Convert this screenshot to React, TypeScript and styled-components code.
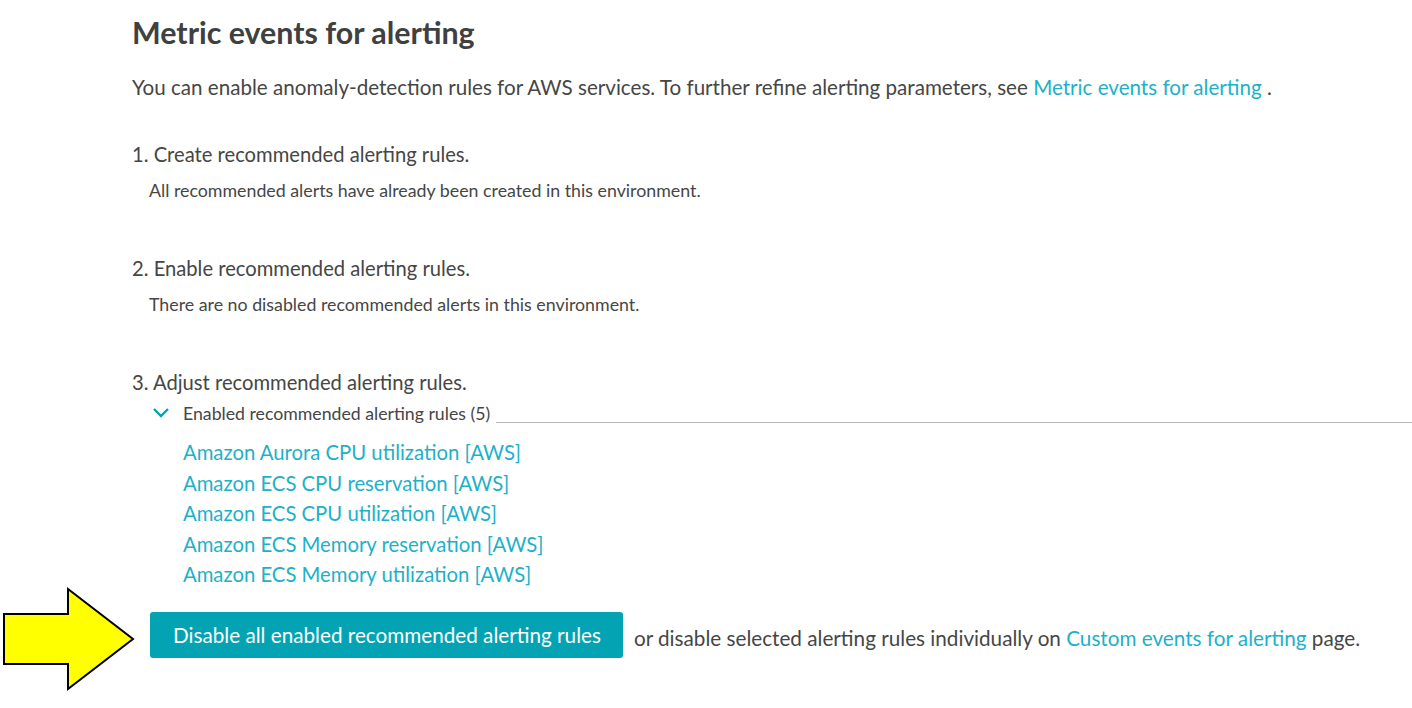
import React from "react";
import styled, { createGlobalStyle } from "styled-components";

const colors = {
  text: "#454646",
  link: "#1cb1c9",
  button: "#04a3b3",
  rule: "#b7b7b7",
};

const GlobalStyle = createGlobalStyle`
  body {
    margin: 0;
    background: #ffffff;
    font-family: Lato, "Noto Sans", sans-serif;
    color: ${colors.text};
  }
`;

const rules = [
  "Amazon Aurora CPU utilization [AWS]",
  "Amazon ECS CPU reservation [AWS]",
  "Amazon ECS CPU utilization [AWS]",
  "Amazon ECS Memory reservation [AWS]",
  "Amazon ECS Memory utilization [AWS]",
];

function App() {
  return (
    <>
      <GlobalStyle />
      <Page>
        <Title>Metric events for alerting</Title>
        <Intro>
          You can enable anomaly-detection rules for AWS services. To further
          refine alerting parameters, see{" "}
          <Link href="#">Metric events for alerting</Link> .
        </Intro>

        <Step>
          <StepTitle>1. Create recommended alerting rules.</StepTitle>
          <StepNote>
            All recommended alerts have already been created in this
            environment.
          </StepNote>
        </Step>

        <Step>
          <StepTitle>2. Enable recommended alerting rules.</StepTitle>
          <StepNote>
            There are no disabled recommended alerts in this environment.
          </StepNote>
        </Step>

        <Step>
          <StepTitle>3. Adjust recommended alerting rules.</StepTitle>
          <Expander>
            <Chevron viewBox="0 0 18 12" aria-hidden>
              <path d="M2 2 L9 9 L16 2" />
            </Chevron>
            <ExpanderLabel>Enabled recommended alerting rules (5)</ExpanderLabel>
            <ExpanderRule />
          </Expander>
          <RuleList>
            {rules.map((r) => (
              <li key={r}>
                <Link href="#">{r}</Link>
              </li>
            ))}
          </RuleList>
          <ActionRow>
            <Pointer viewBox="0 0 134 104" aria-hidden>
              <path d="M2 27 H66 V2 L131 52 L66 102 V77 H2 Z" />
            </Pointer>
            <PrimaryButton>Disable all enabled recommended alerting rules</PrimaryButton>
            <ActionText>
              or disable selected alerting rules individually on{" "}
              <Link href="#">Custom events for alerting</Link> page.
            </ActionText>
          </ActionRow>
        </Step>
      </Page>
    </>
  );
}

const Page = styled.main`
  min-height: 100vh;
  box-sizing: border-box;
  padding: 14px 0 60px 132px;
`;

const Title = styled.h1`
  margin: 0;
  font-size: 30.4px;
  font-weight: 700;
  line-height: 36px;
  color: #3f4040;
`;

const Intro = styled.p`
  margin: 24px 0 0;
  font-size: 20.6px;
  line-height: 26px;
`;

const Link = styled.a`
  color: ${colors.link};
  text-decoration: none;
`;

const Step = styled.section`
  margin-top: 41px;
  & + & {
    margin-top: 54px;
  }
`;

const StepTitle = styled.h2`
  margin: 0;
  font-size: 20.2px;
  font-weight: 400;
  line-height: 26px;
`;

const StepNote = styled.p`
  margin: 12px 0 0 17px;
  font-size: 17.8px;
  line-height: 22px;
`;

const Expander = styled.div`
  display: flex;
  align-items: center;
  margin: 7px 0 0 20px;
  height: 22px;
`;

const Chevron = styled.svg`
  width: 18px;
  height: 12px;
  margin-right: 13px;
  fill: none;
  stroke: ${colors.button};
  stroke-width: 2.4;
`;

const ExpanderLabel = styled.span`
  font-size: 17.7px;
  white-space: nowrap;
`;

const ExpanderRule = styled.span`
  flex: 1;
  align-self: flex-end;
  margin: 0 0 1px 6px;
  border-bottom: 1.5px solid ${colors.rule};
`;

const RuleList = styled.ul`
  list-style: none;
  margin: 13px 0 0 51px;
  padding: 0;
  font-size: 20.3px;
  line-height: 30.5px;
`;

const ActionRow = styled.div`
  position: relative;
  display: flex;
  align-items: center;
  margin: 22px 0 0 18px;
`;

const Pointer = styled.svg`
  position: absolute;
  left: -148px;
  top: -25px;
  width: 134px;
  height: 104px;
  overflow: visible;
  fill: #ffff00;
  stroke: #000;
  stroke-width: 2;
`;

const PrimaryButton = styled.button`
  height: 46px;
  padding: 0 22px 0 23px;
  border: 0;
  border-radius: 3px;
  background: ${colors.button};
  color: #fff;
  font-family: inherit;
  font-size: 20.7px;
  cursor: pointer;
`;

const ActionText = styled.span`
  margin: 6px 0 0 11px;
  font-size: 20.7px;
`;

export default App;
